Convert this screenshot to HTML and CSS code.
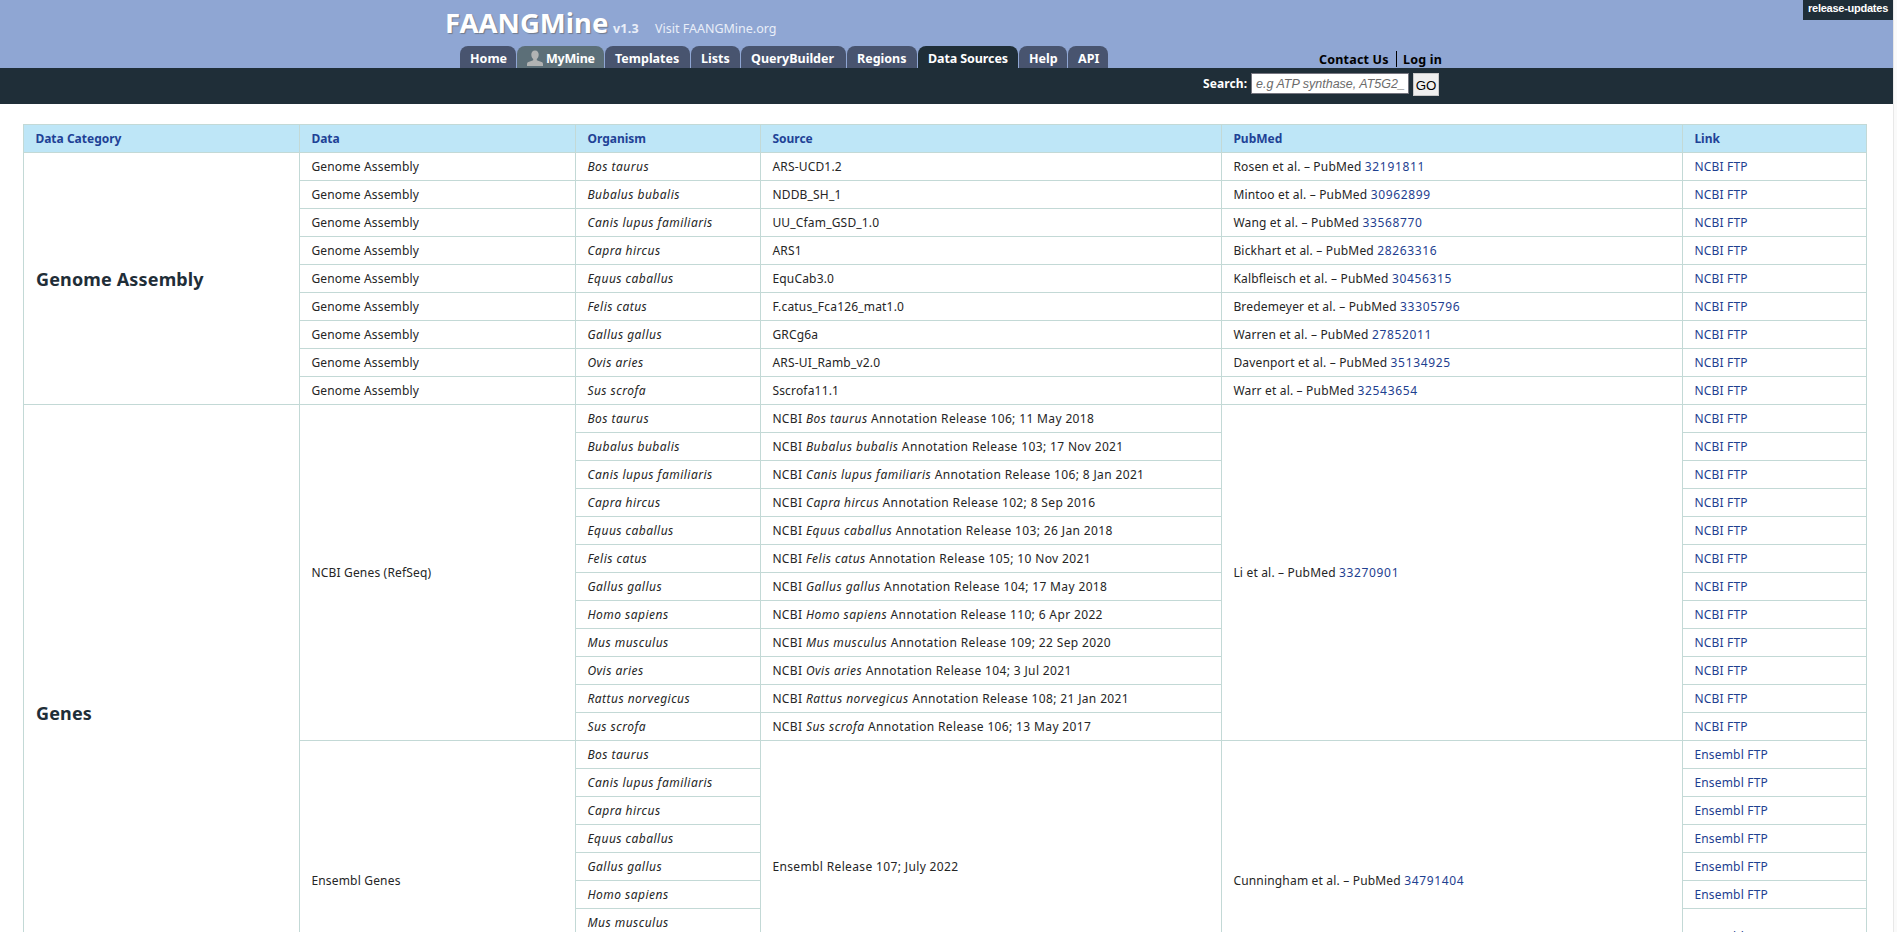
FILE: index.html
```
<!DOCTYPE html>
<html lang="en">
<head>
<meta charset="utf-8">
<title>FAANGMine: Data Sources</title>
<link rel="stylesheet" href="styles.css">
</head>
<body>
<div class="page">
<div class="branch">release-updates</div>
<header class="header">
  <div class="brand"><span class="logo">FAANGMine</span><span class="version">v1.3</span><span class="visit">Visit FAANGMine.org</span></div>
  <div class="bar">
    <nav class="tabs">
      <a class="tab home">Home</a>
      <a class="tab mymine"><svg class="user" viewBox="0 0 16 16" width="16" height="16"><path fill="#b1b3b3" d="M8 0.5c2.5 0 3.7 1.7 3.7 4 0 2-.8 3.700-1.900 4.500v1.300l4.700 1.800c1 .4 1.500 1.100 1.500 2.100v1.800H0v-1.800c0-1 .5-1.700 1.500-2.100l4.700-1.800V9C5.100 8.200 4.300 6.500 4.300 4.500c0-2.300 1.200-4 3.700-4z"/></svg><span class="t">MyMine</span></a>
      <a class="tab templates">Templates</a>
      <a class="tab lists">Lists</a>
      <a class="tab query">QueryBuilder</a>
      <a class="tab regions">Regions</a>
      <a class="tab sources">Data Sources</a>
      <a class="tab help">Help</a>
      <a class="tab api">API</a>
    </nav>
    <div class="account"><a class="contact">Contact Us</a><a class="login">Log in</a></div>
  </div>
</header>
<div class="searchbar"><label class="label">Search:</label><div class="field">e.g ATP synthase, AT5G2_</div><div class="go">GO</div></div>
<main class="content">
<table class="grid">
<colgroup><col class="c1"><col class="c1"><col class="c3"><col class="c4"><col class="c4"><col class="c6"></colgroup>
<tr class="head"><th>Data Category</th><th>Data</th><th>Organism</th><th>Source</th><th>PubMed</th><th>Link</th></tr>
<tr><td rowspan="9" class="cat">Genome Assembly</td><td>Genome Assembly</td><td><i>Bos taurus</i></td><td>ARS-UCD1.2</td><td>Rosen et al. – PubMed <a class="n">32191811</a></td><td><a>NCBI FTP</a></td></tr>
<tr><td>Genome Assembly</td><td><i>Bubalus bubalis</i></td><td>NDDB_SH_1</td><td>Mintoo et al. – PubMed <a class="n">30962899</a></td><td><a>NCBI FTP</a></td></tr>
<tr><td>Genome Assembly</td><td><i>Canis lupus familiaris</i></td><td>UU_Cfam_GSD_1.0</td><td>Wang et al. – PubMed <a class="n">33568770</a></td><td><a>NCBI FTP</a></td></tr>
<tr><td>Genome Assembly</td><td><i>Capra hircus</i></td><td>ARS1</td><td>Bickhart et al. – PubMed <a class="n">28263316</a></td><td><a>NCBI FTP</a></td></tr>
<tr><td>Genome Assembly</td><td><i>Equus caballus</i></td><td>EquCab3.0</td><td>Kalbfleisch et al. – PubMed <a class="n">30456315</a></td><td><a>NCBI FTP</a></td></tr>
<tr><td>Genome Assembly</td><td><i>Felis catus</i></td><td>F.catus_Fca126_mat1.0</td><td>Bredemeyer et al. – PubMed <a class="n">33305796</a></td><td><a>NCBI FTP</a></td></tr>
<tr><td>Genome Assembly</td><td><i>Gallus gallus</i></td><td>GRCg6a</td><td>Warren et al. – PubMed <a class="n">27852011</a></td><td><a>NCBI FTP</a></td></tr>
<tr><td>Genome Assembly</td><td><i>Ovis aries</i></td><td>ARS-UI_Ramb_v2.0</td><td>Davenport et al. – PubMed <a class="n">35134925</a></td><td><a>NCBI FTP</a></td></tr>
<tr><td>Genome Assembly</td><td><i>Sus scrofa</i></td><td>Sscrofa11.1</td><td>Warr et al. – PubMed <a class="n">32543654</a></td><td><a>NCBI FTP</a></td></tr>
<tr><td rowspan="22" class="cat">Genes</td><td rowspan="12">NCBI Genes (RefSeq)</td><td><i>Bos taurus</i></td><td class="rel">NCBI <i>Bos taurus</i> Annotation Release 106; 11 May 2018</td><td rowspan="12">Li et al. – PubMed <a class="n">33270901</a></td><td><a>NCBI FTP</a></td></tr>
<tr><td><i>Bubalus bubalis</i></td><td class="rel">NCBI <i>Bubalus bubalis</i> Annotation Release 103; 17 Nov 2021</td><td><a>NCBI FTP</a></td></tr>
<tr><td><i>Canis lupus familiaris</i></td><td class="rel">NCBI <i>Canis lupus familiaris</i> Annotation Release 106; 8 Jan 2021</td><td><a>NCBI FTP</a></td></tr>
<tr><td><i>Capra hircus</i></td><td class="rel">NCBI <i>Capra hircus</i> Annotation Release 102; 8 Sep 2016</td><td><a>NCBI FTP</a></td></tr>
<tr><td><i>Equus caballus</i></td><td class="rel">NCBI <i>Equus caballus</i> Annotation Release 103; 26 Jan 2018</td><td><a>NCBI FTP</a></td></tr>
<tr><td><i>Felis catus</i></td><td class="rel">NCBI <i>Felis catus</i> Annotation Release 105; 10 Nov 2021</td><td><a>NCBI FTP</a></td></tr>
<tr><td><i>Gallus gallus</i></td><td class="rel">NCBI <i>Gallus gallus</i> Annotation Release 104; 17 May 2018</td><td><a>NCBI FTP</a></td></tr>
<tr><td><i>Homo sapiens</i></td><td class="rel">NCBI <i>Homo sapiens</i> Annotation Release 110; 6 Apr 2022</td><td><a>NCBI FTP</a></td></tr>
<tr><td><i>Mus musculus</i></td><td class="rel">NCBI <i>Mus musculus</i> Annotation Release 109; 22 Sep 2020</td><td><a>NCBI FTP</a></td></tr>
<tr><td><i>Ovis aries</i></td><td class="rel">NCBI <i>Ovis aries</i> Annotation Release 104; 3 Jul 2021</td><td><a>NCBI FTP</a></td></tr>
<tr><td><i>Rattus norvegicus</i></td><td class="rel">NCBI <i>Rattus norvegicus</i> Annotation Release 108; 21 Jan 2021</td><td><a>NCBI FTP</a></td></tr>
<tr><td><i>Sus scrofa</i></td><td class="rel">NCBI <i>Sus scrofa</i> Annotation Release 106; 13 May 2017</td><td><a>NCBI FTP</a></td></tr>
<tr><td rowspan="10">Ensembl Genes</td><td><i>Bos taurus</i></td><td rowspan="9" class="rel">Ensembl Release 107; July 2022</td><td rowspan="10">Cunningham et al. – PubMed <a class="n">34791404</a></td><td><a>Ensembl FTP</a></td></tr>
<tr><td><i>Canis lupus familiaris</i></td><td><a>Ensembl FTP</a></td></tr>
<tr><td><i>Capra hircus</i></td><td><a>Ensembl FTP</a></td></tr>
<tr><td><i>Equus caballus</i></td><td><a>Ensembl FTP</a></td></tr>
<tr><td><i>Gallus gallus</i></td><td><a>Ensembl FTP</a></td></tr>
<tr><td><i>Homo sapiens</i></td><td><a>Ensembl FTP</a></td></tr>
<tr><td><i>Mus musculus</i></td><td rowspan="2"><a>Ensembl FTP</a></td></tr>
<tr><td></td></tr>
<tr><td></td><td></td></tr>
<tr><td></td><td></td><td></td></tr>
</table>
</main>
</div>
<div class="scroll"></div>
</body>
</html>
```
FILE: styles.css
```
* { box-sizing: border-box; }
body {
  margin: 0;
  height: 932px;
  overflow: hidden;
  display: flex;
  background: #fff;
  font-family: "Noto Sans", "Open Sans", sans-serif;
  font-size: 12px;
  color: #252525;
}
.page { width: 1893px; height: 932px; overflow: hidden; position: relative; }
.scroll { width: 4px; height: 932px; background: #fafafa; border-left: 1px solid #e8e8e8; }
.branch {
  position: absolute; top: 0; right: 0;
  width: 90px; height: 20px; padding-left: 5px;
  background: #1f2e38; color: #fff;
  font: bold 11px/16px "Liberation Sans", sans-serif;
  letter-spacing: -.25px;
  white-space: nowrap;
}
.header { height: 68px; background: #8fa6d3; display: flex; flex-direction: column; justify-content: space-between; }
.brand { height: 46px; padding-left: 445px; display: flex; align-items: baseline; white-space: nowrap; color: #fff; }
.logo { width: 168px; font-size: 27.5px; line-height: 46px; font-weight: bold; text-shadow: 1px 1px 1px #707a8c; }
.version { width: 42px; font-weight: bold; font-size: 12.5px; letter-spacing: .2px; color: #e9eef8; }
.visit { color: #e9eef8; font-size: 12.5px; }
.bar { display: flex; height: 22px; padding-left: 460px; }
.tabs { display: flex; gap: 1px; width: 859px; }
.tab {
  height: 22px; padding-left: 10px; border-radius: 8px 8px 0 0;
  background: #48546f; color: #fff;
  font-weight: bold; font-size: 12.5px; line-height: 25px; white-space: nowrap;
}
.home { width: 56px; }
.mymine { width: 87px; background: #5c6f78; display: flex; letter-spacing: -.2px; }
.user { margin: 4px 3px 0 0; }
.templates { width: 85px; }
.lists { width: 49px; }
.query { width: 105px; }
.regions { width: 70px; }
.sources { width: 100px; background: #1f2e38; letter-spacing: -.1px; }
.help { width: 48px; }
.api { width: 40px; }
.account { display: flex; color: #000; font-weight: bold; font-size: 12.5px; letter-spacing: .2px; line-height: 17px; padding-top: 5px; white-space: nowrap; }
.contact { width: 78px; height: 16px; border-right: 1px solid #000; }
.login { padding-left: 6px; }
.searchbar { display: flex; height: 36px; padding: 5px 0 0 1203px; background: #1f2e38; color: #fff; }
.label { width: 48px; font-weight: bold; line-height: 21px; white-space: nowrap; letter-spacing: .1px; }
.field {
  width: 158px; height: 21px; padding-left: 4px; background: #fff; border: 1px solid #767680;
  color: #6b6b6b; font: italic 12.5px/20px "Liberation Sans", sans-serif; white-space: nowrap;
}
.go {
  width: 26px; height: 23px; margin-left: 4px; background: #efefef; border: 1px solid #c8c8c8; color: #000;
  font: 13.3px/23px "Liberation Sans", sans-serif; text-align: center;
}
.content { padding: 20px 0 0 23px; }
.grid { width: 1844px; table-layout: fixed; border-collapse: collapse; }
.c1 { width: 276px; }
.c3 { width: 185px; }
.c4 { width: 461px; }
.c6 { width: 184px; }
.grid tr { height: 28px; }
.grid th, .grid td {
  height: 28px; padding: 0 11.4px; border: 1px solid #c3d9d6;
  text-align: left; vertical-align: middle; line-height: 16px; white-space: nowrap;
}
.grid td { letter-spacing: .18px; }
.grid td.rel { letter-spacing: .36px; }
.grid th { background: #bee6f7; color: #1e4296; }
.grid a { color: #1e4090; }
.grid i { letter-spacing: .48px; }
.grid .n { letter-spacing: .65px; }
.grid td.cat { font-size: 18px; font-weight: bold; color: #1f2e38; line-height: 24px; letter-spacing: .15px; padding-left: 12px; }
```
